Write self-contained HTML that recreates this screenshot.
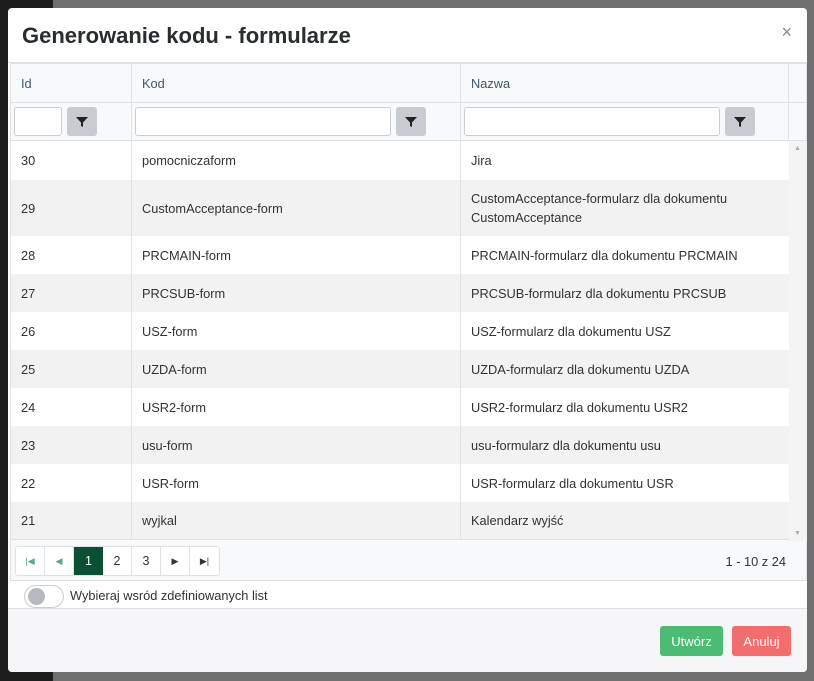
<!DOCTYPE html><html><head><style>
*{box-sizing:border-box}body{margin:0;width:814px;height:681px;background:#6e6e6e;font-family:"Liberation Sans",sans-serif;font-size:12.8px;color:#333;position:relative;overflow:hidden}
.dark{position:absolute;left:0;top:0;width:53px;height:681px;background:#1d1d1d}
.modal{position:absolute;left:8px;top:8px;width:799px;height:664px;background:#fff;border-radius:4px;overflow:hidden}
.hd{height:55px;border-bottom:1px solid #dee2e6;position:relative}
.hd h1{margin:0;position:absolute;left:14px;top:15px;font-size:22px;font-weight:bold;color:#2a2d30;letter-spacing:0px}
.x{position:absolute;right:15px;top:14px;font-size:18px;color:#888}
.grid{position:absolute;border:1px solid #dee2e6;background:#f8f9fa}
.row{position:absolute;left:0;width:778px;display:flex}
.c{border-right:1px solid #dee2e6;padding-left:10px;display:flex;align-items:center;height:100%}
.c1{width:121px}.c2{width:329px}.c3{width:328px;border-right:none}
.inp{height:29px;background:#fff;border:1px solid #ccc;border-radius:3px}
.fb{width:30px;height:29px;background:#c8cbcf;border-radius:3px;display:flex;align-items:center;justify-content:center;margin-left:5px}
.sb{position:absolute;left:778px;top:77px;width:18px;height:400px;background:#f4f4f4}
.pg{position:absolute;left:4px;top:482px;height:30px;display:flex;border:1px solid #dee2e6;border-radius:3px;background:#fff}
.pg div{width:29px;border-right:1px solid #dee2e6;display:flex;align-items:center;justify-content:center;color:#333;font-size:12.5px}
.btn{position:absolute;top:626px;height:30px;border-radius:3px;color:#fff;display:flex;align-items:center;justify-content:center;font-size:13px}
</style></head><body><div class="dark"></div>
<div class="modal">
<div class="hd"><h1>Generowanie kodu - formularze</h1><span class="x">×</span></div>
</div>
<div class="grid" style="left:10px;top:63px;width:797px;height:518px">
<div class="row" style="top:0;height:39px;border-bottom:1px solid #dee2e6;width:796px"><div class="c c1" style="color:#456">Id</div><div class="c c2" style="color:#456">Kod</div><div class="c c3" style="color:#456;border-right:1px solid #dee2e6">Nazwa</div></div>
<div class="row" style="top:39px;height:38px;border-bottom:1px solid #dee2e6;width:796px">
<div class="c c1" style="padding-left:3px"><div class="inp" style="width:48px"></div><div class="fb"><svg width="12" height="12" viewBox="0 0 12 12"><path d="M0 1h12L7 6.5V11L5 10V6.5z" fill="#222"/></svg></div></div>
<div class="c c2" style="padding-left:3px"><div class="inp" style="width:256px"></div><div class="fb"><svg width="12" height="12" viewBox="0 0 12 12"><path d="M0 1h12L7 6.5V11L5 10V6.5z" fill="#222"/></svg></div></div>
<div class="c c3" style="padding-left:3px;border-right:1px solid #dee2e6"><div class="inp" style="width:256px"></div><div class="fb"><svg width="12" height="12" viewBox="0 0 12 12"><path d="M0 1h12L7 6.5V11L5 10V6.5z" fill="#222"/></svg></div></div></div>
<div class="row" style="top:77px;height:39px;background:#fff"><div class="c c1">30</div><div class="c c2">pomocniczaform</div><div class="c c3">Jira</div></div>
<div class="row" style="top:116px;height:56px;background:#f2f2f2"><div class="c c1">29</div><div class="c c2">CustomAcceptance-form</div><div class="c c3" style="line-height:19px">CustomAcceptance-formularz dla dokumentu<br>CustomAcceptance</div></div>
<div class="row" style="top:172px;height:38px;background:#fff"><div class="c c1">28</div><div class="c c2">PRCMAIN-form</div><div class="c c3">PRCMAIN-formularz dla dokumentu PRCMAIN</div></div>
<div class="row" style="top:210px;height:38px;background:#f2f2f2"><div class="c c1">27</div><div class="c c2">PRCSUB-form</div><div class="c c3">PRCSUB-formularz dla dokumentu PRCSUB</div></div>
<div class="row" style="top:248px;height:38px;background:#fff"><div class="c c1">26</div><div class="c c2">USZ-form</div><div class="c c3">USZ-formularz dla dokumentu USZ</div></div>
<div class="row" style="top:286px;height:38px;background:#f2f2f2"><div class="c c1">25</div><div class="c c2">UZDA-form</div><div class="c c3">UZDA-formularz dla dokumentu UZDA</div></div>
<div class="row" style="top:324px;height:38px;background:#fff"><div class="c c1">24</div><div class="c c2">USR2-form</div><div class="c c3">USR2-formularz dla dokumentu USR2</div></div>
<div class="row" style="top:362px;height:38px;background:#f2f2f2"><div class="c c1">23</div><div class="c c2">usu-form</div><div class="c c3">usu-formularz dla dokumentu usu</div></div>
<div class="row" style="top:400px;height:38px;background:#fff"><div class="c c1">22</div><div class="c c2">USR-form</div><div class="c c3">USR-formularz dla dokumentu USR</div></div>
<div class="row" style="top:438px;height:38px;background:#f2f2f2;border-bottom:1px solid #dee2e6"><div class="c c1">21</div><div class="c c2">wyjkal</div><div class="c c3">Kalendarz wyjść</div></div>
<div class="sb"><span style="position:absolute;left:5px;top:4px;font-size:7px;color:#aaa">▲</span><span style="position:absolute;left:5px;bottom:4px;font-size:7px;color:#aaa">▼</span></div>
<div class="pg"><div style="color:#5a8;font-size:9px">|◀</div><div style="color:#5a8;font-size:9px">◀</div><div style="background:#0b5035;color:#fff;border:none">1</div><div>2</div><div>3</div><div style="font-size:9px">▶</div><div style="font-size:9px;border-right:none">▶|</div></div>
<div style="position:absolute;right:20px;top:490px">1 - 10 z 24</div>
</div>
<div style="position:absolute;left:8px;top:582px;width:799px;height:27px;background:#fff;border-bottom:1px solid #dee2e6"></div>
<div style="position:absolute;left:24px;top:585px;width:40px;height:23px;border:1px solid #ccc;border-radius:12px;background:#fff"><div style="position:absolute;left:3px;top:2px;width:17px;height:17px;border-radius:50%;background:#b5bac0"></div></div>
<div style="position:absolute;left:70px;top:588px">Wybieraj wsród zdefiniowanych list</div>
<div style="position:absolute;left:8px;top:609px;width:799px;height:63px;background:#f6f6f8;border-radius:0 0 4px 4px"></div>
<div class="btn" style="left:660px;width:63px;background:#4cbc74">Utwórz</div>
<div class="btn" style="left:732px;width:59px;background:#f46d6d">Anuluj</div>
</body></html>
